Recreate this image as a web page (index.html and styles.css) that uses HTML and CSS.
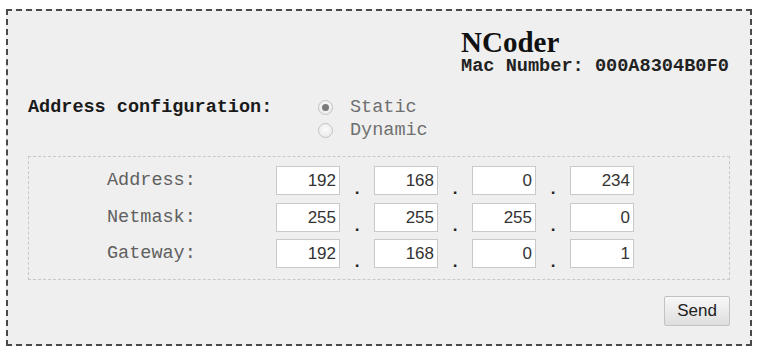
FILE: index.html
```html
<!DOCTYPE html>
<html>
<head>
<meta charset="utf-8">
<link rel="stylesheet" href="styles.css">
</head>
<body>
<div class="panel">
  <div class="header">
    <div class="brand">
      <div class="title">NCoder</div>
      <div class="mac">Mac Number: 000A8304B0F0</div>
    </div>
  </div>
  <div class="config">
    <div class="config-label">Address configuration:</div>
    <div class="radios">
      <label class="radio-line"><span class="radio checked"></span>Static</label>
      <label class="radio-line"><span class="radio"></span>Dynamic</label>
    </div>
  </div>
  <div class="net">
    <div class="net-row">
      <span class="net-label">Address:</span>
      <span class="octet">192</span><span class="dot">.</span>
      <span class="octet">168</span><span class="dot">.</span>
      <span class="octet">0</span><span class="dot">.</span>
      <span class="octet">234</span>
    </div>
    <div class="net-row">
      <span class="net-label">Netmask:</span>
      <span class="octet">255</span><span class="dot">.</span>
      <span class="octet">255</span><span class="dot">.</span>
      <span class="octet">255</span><span class="dot">.</span>
      <span class="octet">0</span>
    </div>
    <div class="net-row">
      <span class="net-label">Gateway:</span>
      <span class="octet">192</span><span class="dot">.</span>
      <span class="octet">168</span><span class="dot">.</span>
      <span class="octet">0</span><span class="dot">.</span>
      <span class="octet">1</span>
    </div>
  </div>
  <div class="actions">
    <button class="send">Send</button>
  </div>
</div>
</body>
</html>
```

FILE: styles.css
```css
html, body {
  margin: 0;
  padding: 0;
  background: #ffffff;
}

.panel {
  box-sizing: border-box;
  width: 746px;
  height: 337px;
  margin: 9px 0 0 6px;
  padding: 0 20px;
  border: 2px dashed #4a4a4a;
  background: #efefef;
  font-family: "Liberation Mono", "Courier New", monospace;
}

.header {
  display: flex;
  justify-content: flex-end;
  padding-top: 20px;
}

.brand {
  width: 269px;
}

.title {
  font-family: "Liberation Serif", "Times New Roman", serif;
  font-weight: bold;
  font-size: 29px;
  line-height: 22px;
  color: #111;
}

.mac {
  margin-top: 7px;
  font-weight: bold;
  font-size: 18.6px;
  line-height: 14px;
  color: #222;
  white-space: nowrap;
}

.config {
  display: flex;
  margin-top: 22px;
}

.config-label {
  width: 290px;
  font-weight: bold;
  font-size: 18.5px;
  line-height: 24px;
  color: #1a1a1a;
  white-space: nowrap;
}

.radios {
  display: flex;
  flex-direction: column;
}

.radio-line {
  display: flex;
  align-items: center;
  font-size: 18.5px;
  line-height: 23px;
  color: #707070;
}

.radio {
  box-sizing: border-box;
  width: 15px;
  height: 15px;
  margin-right: 17px;
  border: 1px solid #c4c4c4;
  border-radius: 50%;
  background: radial-gradient(circle at 50% 40%, #fbfbfb 0%, #e6e6e6 100%);
  display: flex;
  align-items: center;
  justify-content: center;
}

.radio.checked::after {
  content: "";
  width: 7px;
  height: 7px;
  border-radius: 50%;
  background: #7a7a7a;
}

.net {
  margin-top: 14px;
  border: 1px dashed #c8c8c8;
  padding: 9px 0 11px 78px;
  display: flex;
  flex-direction: column;
  gap: 7.5px;
}

.net-row {
  display: flex;
  align-items: center;
  height: 29px;
}

.net-label {
  width: 169px;
  font-size: 18.5px;
  color: #606060;
}

.octet {
  box-sizing: border-box;
  width: 64px;
  height: 29px;
  padding-right: 3px;
  border: 1px solid #c9c9c9;
  background: #ffffff;
  text-align: right;
  font-family: "Liberation Sans", Arial, sans-serif;
  font-size: 17px;
  line-height: 27px;
  color: #333;
}

.dot {
  box-sizing: border-box;
  align-self: stretch;
  width: 34px;
  padding-top: 8px;
  text-align: center;
  font-family: "Liberation Sans", Arial, sans-serif;
  font-weight: bold;
  font-size: 17px;
  line-height: 29px;
  color: #222;
}

.actions {
  display: flex;
  justify-content: flex-end;
  margin-top: 16px;
}

.send {
  box-sizing: border-box;
  width: 66px;
  height: 30px;
  padding: 0;
  border: 1px solid #c2c2c2;
  border-radius: 2px;
  background: linear-gradient(#f8f8f8, #dedede);
  font-family: "Liberation Sans", Arial, sans-serif;
  font-size: 17px;
  color: #222;
}
```
